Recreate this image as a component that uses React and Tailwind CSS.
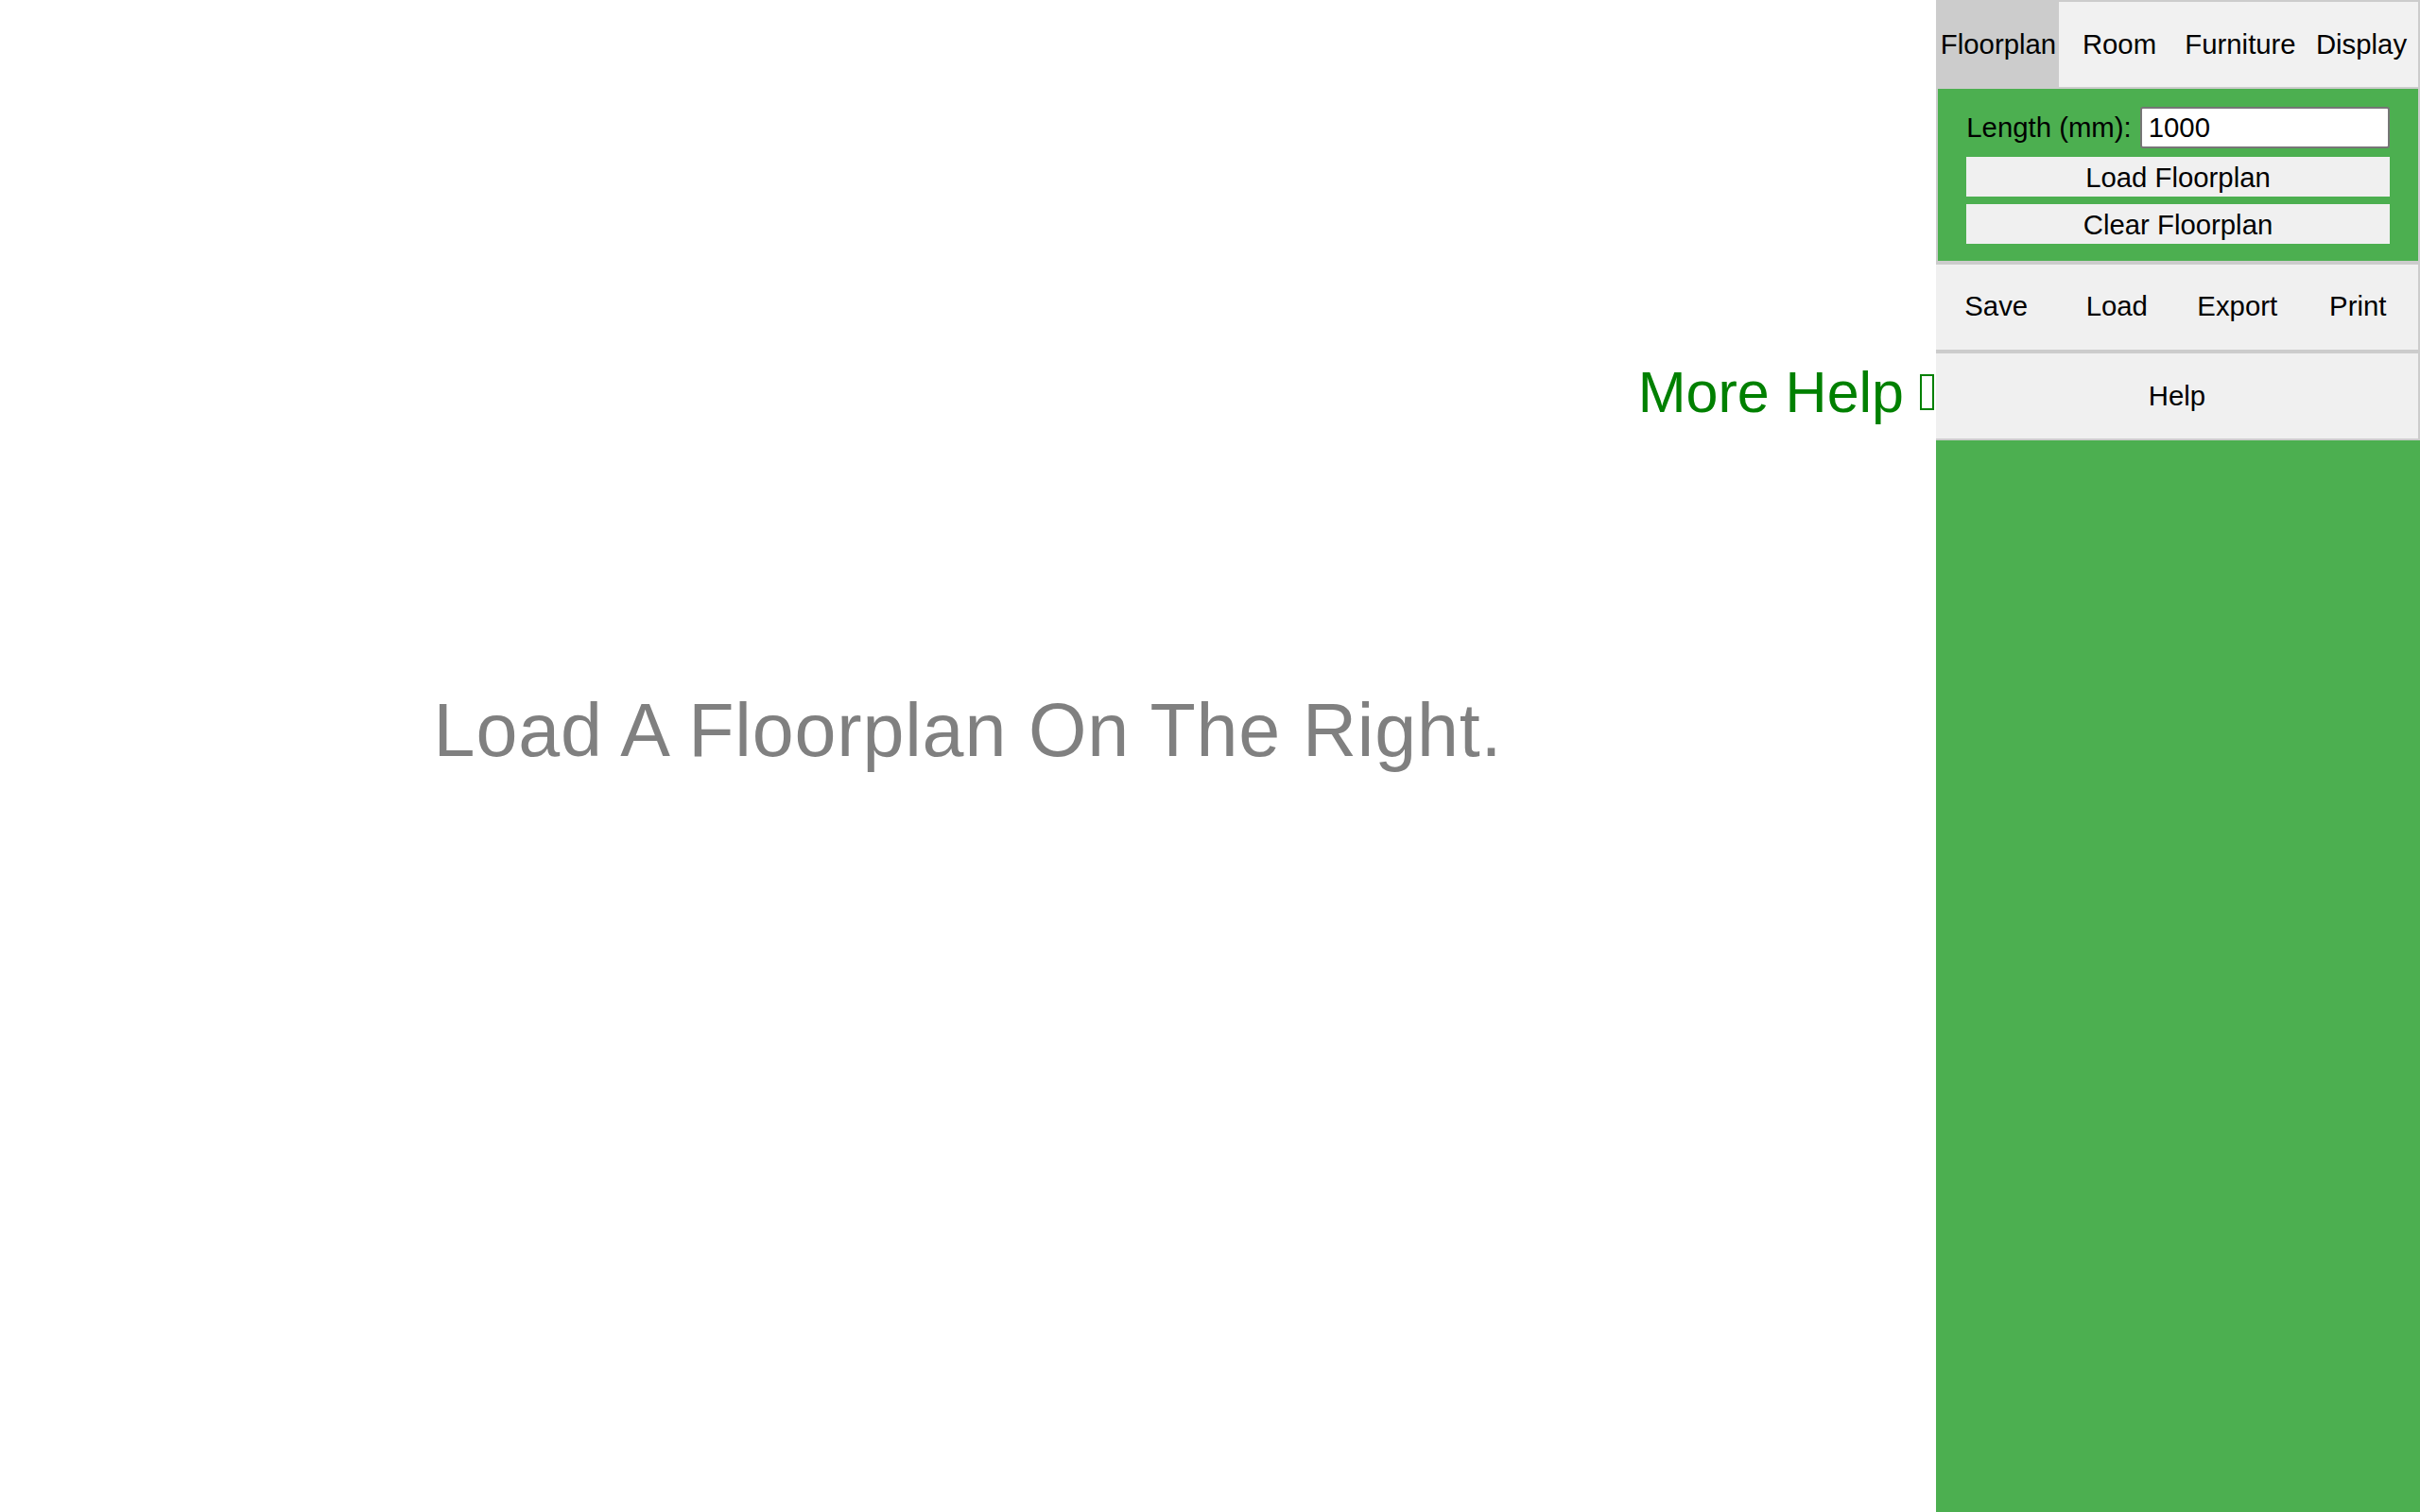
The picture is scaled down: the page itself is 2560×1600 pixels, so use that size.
import { useState } from "react";

const tabs = ["Floorplan", "Room", "Furniture", "Display"];
const fileActions = ["Save", "Load", "Export", "Print"];

export default function App() {
  const [active, setActive] = useState("Floorplan");
  const [length, setLength] = useState("1000");

  return (
    <div className="flex h-screen w-full overflow-hidden bg-white font-['Liberation_Sans',Arial,sans-serif] text-black">
      {/* canvas area */}
      <div className="relative flex-1">
        <div className="flex h-full items-center justify-center pb-[56px]">
          <p className="text-[79px] leading-[91px] tracking-[0.85px] text-[#808080]">
            Load A Floorplan On The Right.
          </p>
        </div>
        <a className="absolute right-[2px] top-[380px] whitespace-nowrap text-[61px] leading-[70px] text-[#008000]">
          More Help{" "}
          <span className="mb-[2px] inline-block h-[38px] w-[15px] border-2 border-[#008000]" />
        </a>
      </div>

      {/* sidebar */}
      <div className="flex w-[512px] flex-col bg-[#4caf50] text-[29.33px]">
        <div className="flex h-[94px] overflow-hidden border-2 border-[#ccc] bg-[#f1f1f1]">
          {tabs.map((t) => (
            <button
              key={t}
              onClick={() => setActive(t)}
              className={
                "flex w-[128px] shrink-0 items-center justify-center whitespace-nowrap " +
                (active === t ? "bg-[#ccc]" : "bg-[#f1f1f1]")
              }
            >
              {t}
            </button>
          ))}
        </div>

        <div className="flex flex-col border-2 border-t-0 border-[#ccc] px-[30px] pb-[18px] pt-[19px]">
          <div className="flex items-center justify-center gap-[9px]">
            <label className="whitespace-nowrap">Length (mm):</label>
            <input
              value={length}
              onChange={(e) => setLength(e.target.value)}
              className="h-[44px] w-[264px] rounded-[3px] border-2 border-[#767676] bg-white px-[7px] text-[29.33px] outline-none"
            />
          </div>
          <button className="mt-[9px] h-[42px] w-full bg-[#f0f0f0] pb-[6px]">Load Floorplan</button>
          <button className="mt-[8px] h-[42px] w-full bg-[#f0f0f0] pb-[4px]">Clear Floorplan</button>
        </div>

        <div className="grid h-[94px] grid-cols-4 border-2 border-l-0 border-[#ccc] bg-[#f0f0f0]">
          {fileActions.map((a) => (
            <button key={a} className="flex items-center justify-center pb-[2px]">
              {a}
            </button>
          ))}
        </div>

        <button className="h-[94px] w-full border-2 border-l-0 border-[#ccc] bg-[#f0f0f0]">Help</button>
      </div>
    </div>
  );
}
